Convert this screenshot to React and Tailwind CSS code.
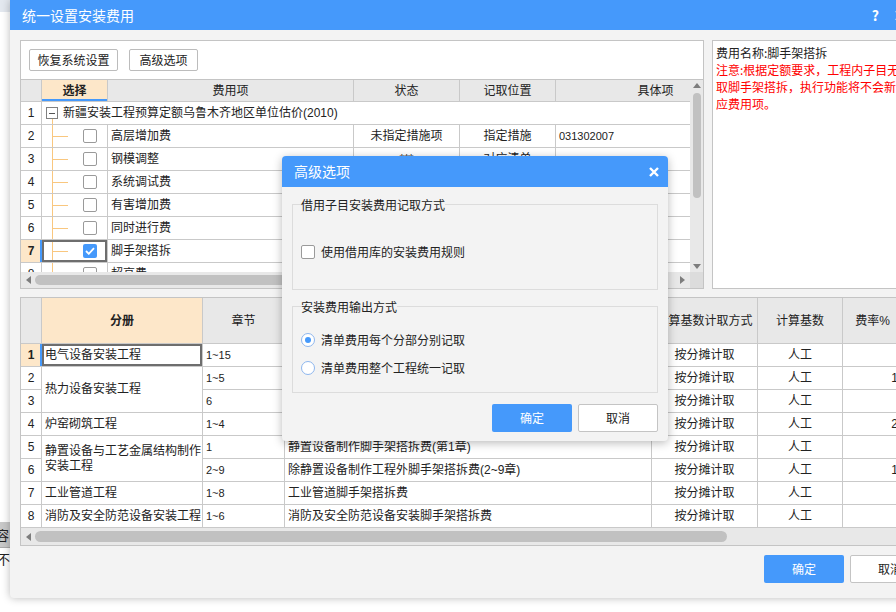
import React from "react";

const topRows = [
  { n: 2, name: "高层增加费", state: "未指定措施项", pos: "指定措施", code: "031302007" },
  { n: 3, name: "钢模调整", state: "***", pos: "对应清单", code: "" },
  { n: 4, name: "系统调试费" },
  { n: 5, name: "有害增加费" },
  { n: 6, name: "同时进行费" },
  { n: 7, name: "脚手架搭拆", checked: true, sel: true },
  { n: 8, name: "超高费" },
];

const bottomRows = [
  { n: 1, part: "电气设备安装工程", ch: "1~15", desc: "电气设备安装工程脚手架搭拆费", rate: "", sel: true },
  { n: 2, part: "热力设备安装工程", span: true, ch: "1~5", desc: "热力设备安装工程脚手架搭拆费(第1~5章)", rate: "1" },
  { n: 3, skip: true, ch: "6", desc: "热力设备安装工程脚手架搭拆费(第6章)", rate: "" },
  { n: 4, part: "炉窑砌筑工程", ch: "1~4", desc: "炉窑砌筑工程脚手架搭拆费", rate: "2" },
  { n: 5, part: "静置设备与工艺金属结构制作安装工程", span: true, ch: "1", desc: "静置设备制作脚手架搭拆费(第1章)", rate: "" },
  { n: 6, skip: true, ch: "2~9", desc: "除静置设备制作工程外脚手架搭拆费(2~9章)", rate: "1" },
  { n: 7, part: "工业管道工程", ch: "1~8", desc: "工业管道脚手架搭拆费", rate: "" },
  { n: 8, part: "消防及安全防范设备安装工程", ch: "1~6", desc: "消防及安全防范设备安装脚手架搭拆费", rate: "" },
];

function Box({ checked }) {
  if (checked) {
    return (
      <span className="flex h-[14px] w-[14px] items-center justify-center rounded-[2px] bg-[#4599fb]">
        <svg width="10" height="8" viewBox="0 0 10 8">
          <path d="M1 4l2.8 2.8L9 1.2" fill="none" stroke="#fff" strokeWidth="1.8" />
        </svg>
      </span>
    );
  }
  return <span className="block h-[14px] w-[14px] rounded-[2px] border border-[#9a9a9a] bg-white" />;
}

function Radio({ on }) {
  return (
    <span className="flex h-[14px] w-[14px] items-center justify-center rounded-full border border-[#8db6ee] bg-white">
      {on && <span className="h-[6px] w-[6px] rounded-full bg-[#4599fb]" />}
    </span>
  );
}

function SelFrame() {
  return (
    <>
      <span className="absolute inset-0 border-2 border-[#6e6e6e]" />
      <span className="absolute -left-[2px] top-0 bottom-0 w-[2px] bg-[#4599fb]" />
    </>
  );
}

function ArrowL() {
  return (
    <svg width="5" height="8" viewBox="0 0 5 8">
      <path d="M5 0L0 4L5 8Z" fill="#7d7d7d" />
    </svg>
  );
}

function TopGrid() {
  const cell = "flex shrink-0 items-center border-r border-b border-[#c9c9c9]";
  return (
    <div className="flex h-[192px]">
      <div className="w-[669px] overflow-hidden">
        <div className="w-[735px] font-['Liberation_Sans','Noto_Sans_CJK_SC',sans-serif] text-[12px]">
          <div className="flex h-[22px] bg-[#e8e8e8]">
            <div className={`${cell} w-[21px]`} />
            <div className={`${cell} w-[66px] justify-center bg-[#fde7c9] font-bold shadow-[inset_0_-2px_0_#4599fb]`}>选择</div>
            <div className={`${cell} w-[246px] justify-center`}>费用项</div>
            <div className={`${cell} w-[106px] justify-center`}>状态</div>
            <div className={`${cell} w-[96px] justify-center`}>记取位置</div>
            <div className={`${cell} w-[200px] justify-center`}>具体项</div>
          </div>
          <div className="flex h-[23px]">
            <div className={`${cell} w-[21px] justify-center`}>1</div>
            <div className={`${cell} relative w-[714px]`}>
              <span className="absolute left-[10px] top-[17px] bottom-0 w-px bg-[#f9c77f]" />
              <span className="ml-[4px] flex h-[12px] w-[12px] items-center justify-center border border-[#808080] bg-white">
                <span className="h-px w-[6px] bg-[#555]" />
              </span>
              <span className="ml-[5px] whitespace-nowrap">新疆安装工程预算定额乌鲁木齐地区单位估价(2010)</span>
            </div>
          </div>
          {topRows.map((r) => (
            <div key={r.n} className="flex h-[23px]">
              <div className={`${cell} w-[21px] justify-center ${r.sel ? "bg-[#fde7c9] font-bold" : ""}`}>{r.n}</div>
              <div className={`${cell} relative w-[66px]`}>
                <span className="absolute left-[10px] top-0 bottom-0 w-px bg-[#f9c77f]" />
                <span className="absolute left-[10px] top-[11px] h-px w-[16px] bg-[#f9c77f]" />
                <span className="ml-[41px]">
                  <Box checked={r.checked} />
                </span>
                {r.sel && <SelFrame />}
              </div>
              <div className={`${cell} w-[246px] pl-[3px]`}>{r.name}</div>
              <div className={`${cell} w-[106px] justify-center`}>{r.state || ""}</div>
              <div className={`${cell} w-[96px] justify-center`}>{r.pos || ""}</div>
              <div className={`${cell} w-[200px] pl-[3px] text-[11px]`}>{r.code || ""}</div>
            </div>
          ))}
        </div>
      </div>
      <div className="flex w-[13px] shrink-0 flex-col items-center bg-[#e8e8e8]">
        <svg className="mt-[3px]" width="8" height="5" viewBox="0 0 8 5">
          <path d="M0 5L4 0L8 5Z" fill="#7d7d7d" />
        </svg>
        <div className="mt-[5px] h-[105px] w-[8px] rounded-full bg-[#c1c1c1]" />
        <div className="flex-1" />
        <svg className="mb-[3px]" width="8" height="5" viewBox="0 0 8 5">
          <path d="M0 0L8 0L4 5Z" fill="#7d7d7d" />
        </svg>
      </div>
    </div>
  );
}

function BottomGrid() {
  const c = "flex items-center border-r border-b border-[#c9c9c9]";
  const h = "flex items-center justify-center border-r border-b border-[#c9c9c9] bg-[#e8e8e8]";
  return (
    <div className="grid grid-cols-[21px_161px_82px_367px_106px_85px_60px] grid-rows-[46px_repeat(8,23px)] font-['Liberation_Sans','Noto_Sans_CJK_SC',sans-serif] text-[12px]">
      <div className={h} />
      <div className={`${h} bg-[#fde7c9] font-bold`}>分册</div>
      <div className={h}>章节</div>
      <div className={h}>对应费用名称</div>
      <div className={h}>计算基数计取方式</div>
      <div className={h}>计算基数</div>
      <div className={h}>费率%</div>
      {bottomRows.map((r) => (
        <React.Fragment key={r.n}>
          <div className={`${c} justify-center ${r.sel ? "bg-[#fde7c9] font-bold" : ""}`}>{r.n}</div>
          {!r.skip && (
            <div className={`${c} relative pl-[3px] leading-[15px] ${r.span ? "row-span-2" : ""}`}>
              {r.part}
              {r.sel && <SelFrame />}
            </div>
          )}
          <div className={`${c} pl-[3px] text-[11px]`}>{r.ch}</div>
          <div className={`${c} pl-[3px] whitespace-nowrap`}>{r.desc}</div>
          <div className={`${c} justify-center`}>按分摊计取</div>
          <div className={`${c} justify-center`}>人工</div>
          <div className={`${c} justify-end pr-[4px]`}>{r.rate}</div>
        </React.Fragment>
      ))}
    </div>
  );
}

function Btn({ primary, children, className = "" }) {
  return (
    <button
      className={`flex h-[28px] w-[80px] items-center justify-center rounded-[2px] text-[12px] ${
        primary ? "bg-[#4599fb] text-white" : "border border-[#c4c4c4] bg-white text-[#222]"
      } ${className}`}
    >
      {children}
    </button>
  );
}

function Window() {
  return (
    <div className="absolute left-[10px] top-0 flex h-[598px] w-[930px] flex-col rounded-b-[4px] bg-[#f3f3f3] shadow-[0_0_8px_rgba(0,0,0,0.28)]">
      <div className="flex h-[30px] shrink-0 items-center bg-[#4599fb] pl-[12px] text-[14px] text-white">
        <span>统一设置安装费用</span>
        <span className="ml-auto font-bold text-[14px]">?</span>
        <span className="ml-[16px] mr-[34px] flex h-[11px] w-[11px] items-center justify-center">
          <svg width="11" height="11" viewBox="0 0 11 11">
            <path d="M1 1L10 10M10 1L1 10" stroke="#fff" strokeWidth="2" />
          </svg>
        </span>
      </div>

      <div className="flex flex-col px-[10px] pt-[10px]">
        <div className="flex h-[249px] gap-[8px]">
          <div className="flex w-[684px] shrink-0 flex-col border border-[#c4c4c4] bg-white">
            <div className="flex h-[38px] items-center gap-[11px] pl-[8px]">
              <button className="h-[22px] w-[89px] rounded-[2px] border border-[#bcbcbc] bg-white text-[12px]">恢复系统设置</button>
              <button className="h-[22px] w-[69px] rounded-[2px] border border-[#bcbcbc] bg-white text-[12px]">高级选项</button>
            </div>
            <div className="border-t border-[#c4c4c4]">
              <TopGrid />
              <div className="flex h-[16px] items-center bg-[#e8e8e8]">
                <span className="ml-[5px]">
                  <ArrowL />
                </span>
                <div className="ml-[4px] h-[10px] w-[520px] rounded-full bg-[#c1c1c1]" />
                <div className="flex-1" />
                <svg className="mr-[5px]" width="5" height="8" viewBox="0 0 5 8">
                  <path d="M0 0L5 4L0 8Z" fill="#7d7d7d" />
                </svg>
                <div className="h-[16px] w-[13px] bg-[#dcdcdc]" />
              </div>
            </div>
          </div>
          <div className="flex-1 overflow-hidden whitespace-nowrap border border-[#c4c4c4] bg-white pl-[3px] pt-[3px] text-[12px] leading-[17px]">
            <div className="text-[#222]">费用名称:脚手架搭拆</div>
            <div className="text-[#ff0000]">注意:根据定额要求，工程内子目无法计</div>
            <div className="text-[#ff0000]">取脚手架搭拆，执行功能将不会新增对</div>
            <div className="text-[#ff0000]">应费用项。</div>
          </div>
        </div>

        <div className="mt-[8px] flex h-[249px] flex-col overflow-hidden border border-[#c4c4c4] bg-white">
          <BottomGrid />
          <div className="flex h-[17px] items-center bg-[#e8e8e8]">
            <span className="ml-[5px]">
              <ArrowL />
            </span>
            <div className="ml-[4px] h-[11px] w-[692px] rounded-full bg-[#c1c1c1]" />
          </div>
        </div>

        <div className="mt-[9px] flex justify-end gap-[6px]">
          <Btn primary>确定</Btn>
          <Btn>取消</Btn>
        </div>
      </div>
    </div>
  );
}

function Dialog() {
  return (
    <div className="absolute left-[282px] top-[156px] flex h-[285px] w-[386px] flex-col rounded-[4px] bg-[#f3f3f3] text-[12px] shadow-[0_2px_10px_rgba(0,0,0,0.28)]">
      <div className="flex h-[31px] items-center rounded-t-[4px] bg-[#4599fb] pl-[12px] text-[14px] text-white">
        <span>高级选项</span>
        <svg className="ml-auto mr-[9px]" width="10" height="10" viewBox="0 0 10 10">
          <path d="M1 1L9 9M9 1L1 9" stroke="#fff" strokeWidth="2.4" />
        </svg>
      </div>
      <div className="flex flex-col px-[10px] pt-[9px]">
        <fieldset className="h-[94px] border border-[#dcdcdc] px-[8px]">
          <legend className="leading-[17px]">借用子目安装费用记取方式</legend>
          <div className="mt-[30px] flex h-[18px] items-center gap-[6px]">
            <Box />
            <span>使用借用库的安装费用规则</span>
          </div>
        </fieldset>
        <fieldset className="mt-[8px] h-[95px] border border-[#dcdcdc] px-[8px]">
          <legend className="leading-[17px]">安装费用输出方式</legend>
          <div className="mt-[16px] flex h-[18px] items-center gap-[6px]">
            <Radio on />
            <span>清单费用每个分部分别记取</span>
          </div>
          <div className="mt-[10px] flex h-[18px] items-center gap-[6px]">
            <Radio />
            <span>清单费用整个工程统一记取</span>
          </div>
        </fieldset>
        <div className="mt-[11px] flex justify-end gap-[6px]">
          <Btn primary>确定</Btn>
          <Btn>取消</Btn>
        </div>
      </div>
    </div>
  );
}

export default function App() {
  return (
    <div className="relative h-[612px] w-[896px] overflow-hidden bg-white font-['Noto_Sans_CJK_SC',sans-serif] text-[#222]">
      <div className="flex h-full w-[10px] flex-col">
        <div className="h-[12px] bg-[#e3e8ef]" />
        <div className="h-[510px]" />
        <div className="flex h-[25px] items-center overflow-hidden whitespace-nowrap bg-[#c8c8c8] text-[13px]">
          <span className="-ml-[4px]">容</span>
        </div>
        <div className="h-px bg-[#aaaaaa]" />
        <div className="flex h-[22px] items-center overflow-hidden whitespace-nowrap text-[13px]">
          <span className="-ml-[3px]">不</span>
        </div>
      </div>
      <Window />
      <Dialog />
    </div>
  );
}
